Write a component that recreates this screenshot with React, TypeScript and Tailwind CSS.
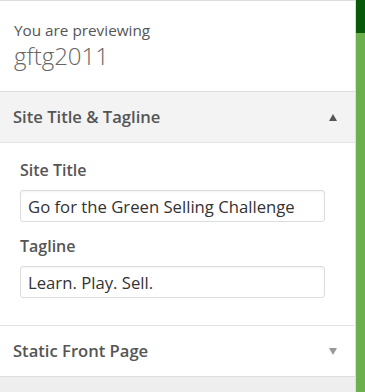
import React from 'react';

function Field({ label, value, className }: { label: string; value: string; className?: string }) {
  return (
    <div className={className}>
      <div className="text-[16px] font-semibold leading-[20px] text-[#555]">{label}</div>
      <input
        readOnly
        value={value}
        className="mt-[10px] block h-[32px] w-[305px] rounded-[3px] border border-[#ddd] bg-white px-[7px] text-[16.7px] text-[#333] shadow-[inset_0_1px_2px_rgba(0,0,0,0.05)] outline-none"
      />
    </div>
  );
}

export default function App() {
  return (
    <div className="flex h-[392px] w-[365px] overflow-hidden bg-white" style={{ fontFamily: '"Open Sans", sans-serif' }}>
      <div className="flex w-[356px] flex-col border-r border-[#ddd] bg-[#eee]">
        <div className="h-[92px] border-y border-[#ddd] bg-white px-[14px] pt-[19px]">
          <p className="text-[15.3px] leading-[20px] text-[#555]">You are previewing</p>
          <p className="mt-[1px] text-[24px] font-light leading-[30px] text-[#666]">gftg2011</p>
        </div>

        <div className="flex h-[51px] items-center justify-between border-b border-[#e4e4e4] bg-[#f3f3f3] pl-[13px] pr-[18px]">
          <span className="text-[16.6px] font-semibold text-[#555]">Site Title &amp; Tagline</span>
          <span className="h-0 w-0 border-x-[4.5px] border-b-[7px] border-x-transparent border-b-[#555]" />
        </div>

        <div className="border-b border-[#e4e4e4] bg-white px-[20px] pb-[27px] pt-[17px]">
          <Field label="Site Title" value="Go for the Green Selling Challenge" />
          <Field className="mt-[14px]" label="Tagline" value="Learn. Play. Sell." />
        </div>

        <div className="flex h-[51px] items-center justify-between border-b border-[#ddd] bg-white pl-[13px] pr-[18px]">
          <span className="text-[16.6px] font-semibold text-[#555]">Static Front Page</span>
          <span className="h-0 w-0 border-x-[4.5px] border-t-[7px] border-x-transparent border-t-[#999]" />
        </div>
      </div>

      <div className="flex flex-1 flex-col">
        <div className="h-[33px] bg-[#075a07]" />
        <div className="flex-1 bg-[#6ab04c]" />
      </div>
    </div>
  );
}
